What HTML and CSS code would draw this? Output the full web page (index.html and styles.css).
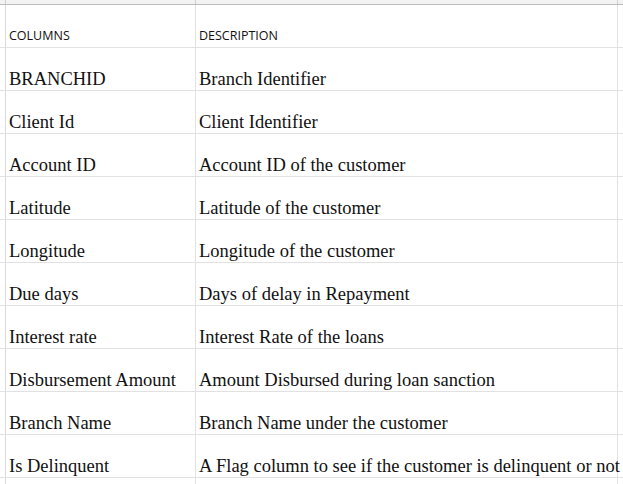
FILE: index.html
```html
<!DOCTYPE html>
<html>
<head>
<meta charset="utf-8">
<link rel="stylesheet" href="styles.css">
</head>
<body>
<div class="sheet">
  <div class="row strip">
    <div class="gutter"></div>
    <div class="cell c1"></div>
    <div class="cell c2"></div>
    <div class="rest"></div>
  </div>
  <div class="row head">
    <div class="gutter"></div>
    <div class="cell c1">COLUMNS</div>
    <div class="cell c2">DESCRIPTION</div>
    <div class="rest"></div>
  </div>
  <div class="row"><div class="gutter"></div><div class="cell c1">BRANCHID</div><div class="cell c2">Branch Identifier</div><div class="rest"></div></div>
  <div class="row"><div class="gutter"></div><div class="cell c1">Client Id</div><div class="cell c2">Client Identifier</div><div class="rest"></div></div>
  <div class="row"><div class="gutter"></div><div class="cell c1">Account ID</div><div class="cell c2">Account ID of the customer</div><div class="rest"></div></div>
  <div class="row"><div class="gutter"></div><div class="cell c1">Latitude</div><div class="cell c2">Latitude of the customer</div><div class="rest"></div></div>
  <div class="row"><div class="gutter"></div><div class="cell c1">Longitude</div><div class="cell c2">Longitude of the customer</div><div class="rest"></div></div>
  <div class="row"><div class="gutter"></div><div class="cell c1">Due days</div><div class="cell c2">Days of delay in Repayment</div><div class="rest"></div></div>
  <div class="row"><div class="gutter"></div><div class="cell c1">Interest rate</div><div class="cell c2">Interest Rate of the loans</div><div class="rest"></div></div>
  <div class="row"><div class="gutter"></div><div class="cell c1">Disbursement Amount</div><div class="cell c2">Amount Disbursed during loan sanction</div><div class="rest"></div></div>
  <div class="row"><div class="gutter"></div><div class="cell c1">Branch Name</div><div class="cell c2">Branch Name under the customer</div><div class="rest"></div></div>
  <div class="row"><div class="gutter"></div><div class="cell c1">Is Delinquent</div><div class="cell c2">A Flag column to see if the customer is delinquent or not</div><div class="rest"></div></div>
  <div class="row"><div class="gutter"></div><div class="cell c1"></div><div class="cell c2"></div><div class="rest"></div></div>
</div>
</body>
</html>
```
FILE: styles.css
```css
html, body {
  margin: 0;
  padding: 0;
  background: #ffffff;
}
.sheet {
  width: 623px;
  height: 484px;
  overflow: hidden;
  font-family: "Liberation Serif", serif;
  font-size: 18.5px;
  color: #111;
}
.row {
  display: flex;
  height: 43px;
  box-sizing: border-box;
  border-bottom: 1px solid #e1e1e1;
}
.row.strip {
  height: 5px;
  background: #f3f3f3;
  border-bottom: 1px solid #bcbcbc;
}
.gutter {
  width: 6px;
  flex: none;
  box-sizing: border-box;
  border-right: 1px solid #dadada;
}
.cell {
  flex: none;
  box-sizing: border-box;
  border-right: 1px solid #e1e1e1;
  display: flex;
  align-items: flex-end;
  padding: 0 0 0 3px;
  line-height: normal;
  white-space: nowrap;
  overflow: visible;
}
.c1 { width: 190px; }
.c2 { width: 422px; }
.rest { flex: 1; }
.strip .cell, .strip .gutter { border-right-color: #d0d0d0; }
.head .cell {
  font-family: "Open Sans", sans-serif;
  font-size: 12.5px;
  padding-bottom: 3px;
}
```
